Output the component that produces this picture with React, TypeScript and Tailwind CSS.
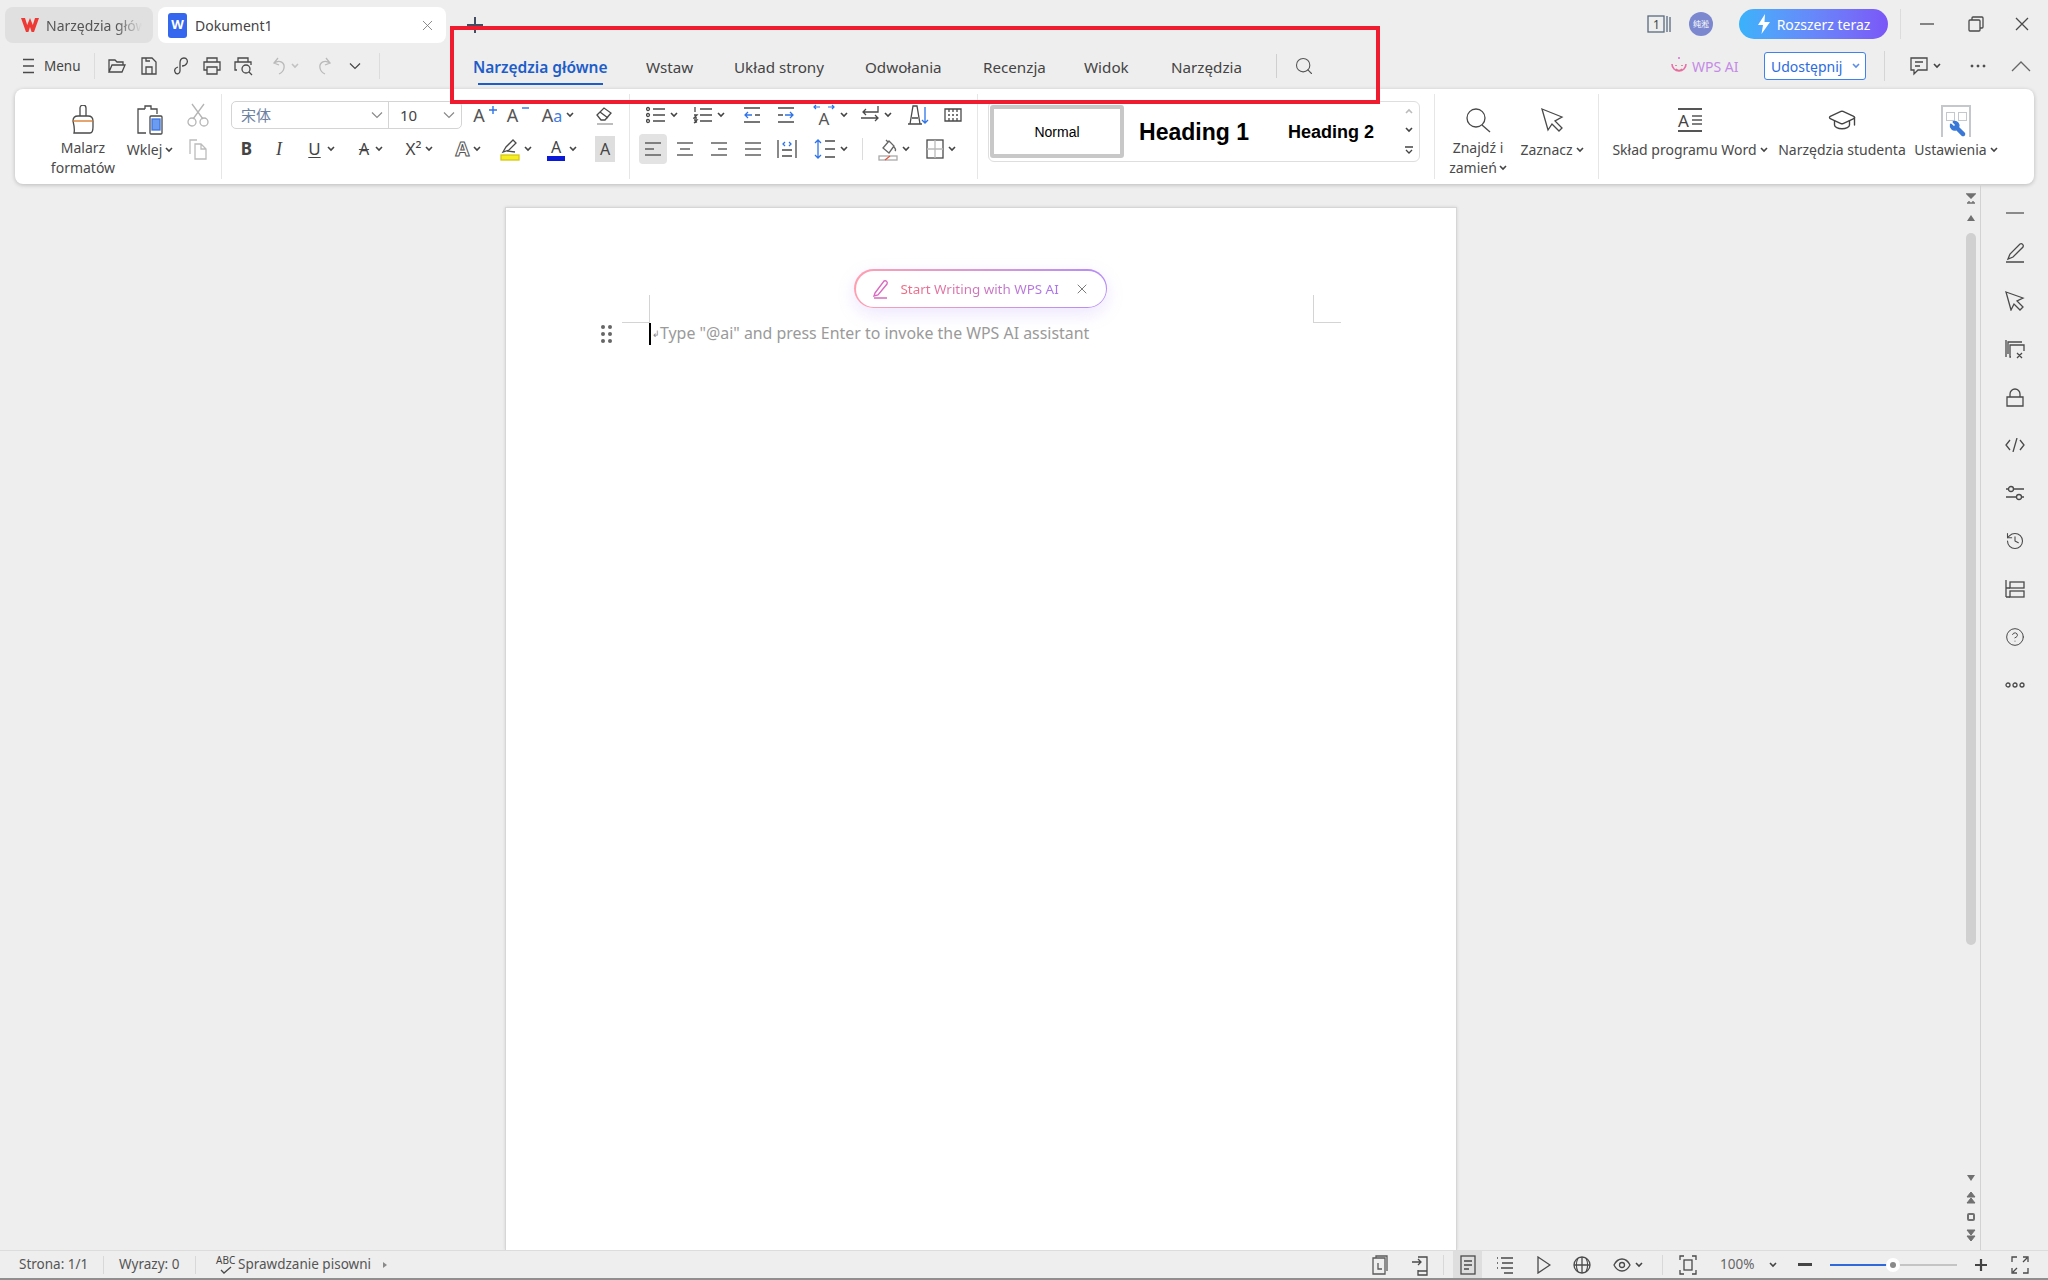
import React from "react";
import { CircleHelp, GraduationCap, History, Search, Wrench, X } from "lucide-react";

type IconProps = { w?: number; h?: number; c?: string; sw?: number; children: React.ReactNode };

// Base for all the hand drawn toolbar icons, coordinates are plain pixels
const Ic: React.FC<IconProps> = ({ w = 20, h = 20, c = "#4a4a4a", sw = 1.3, children }) => (
  <svg width={w} height={h} viewBox={`0 0 ${w} ${h}`} fill="none" stroke={c} strokeWidth={sw} className="shrink-0">
    {children}
  </svg>
);

const Chev: React.FC<{ c?: string }> = ({ c = "#444" }) => (
  <svg width="8" height="6" viewBox="0 0 8 6" fill="none" stroke={c} strokeWidth="1.6" className="shrink-0">
    <path d="M1 1l3 3 3-3" />
  </svg>
);

const ThinChev: React.FC<{ c?: string }> = ({ c = "#8a8a8a" }) => (
  <svg width="12" height="8" viewBox="0 0 12 8" fill="none" stroke={c} strokeWidth="1.2" className="shrink-0">
    <path d="M1 1.5l5 5 5-5" />
  </svg>
);

// One slot of a toolbar row
const Cell: React.FC<{ className: string; children: React.ReactNode }> = ({ className, children }) => (
  <div className={`flex items-center justify-center gap-[4px] shrink-0 ${className}`}>{children}</div>
);

const Sep: React.FC = () => <div className="w-px h-[85px] mt-[5px] bg-[#e6e6e6] shrink-0" />;

// Ribbon button with the icon above and the label below
const BigTool: React.FC<{ className: string; icon: React.ReactNode; children: React.ReactNode }> = ({
  className,
  icon,
  children,
}) => (
  <div className={`flex flex-col items-center pt-[14px] shrink-0 ${className}`}>
    <div className="h-[34px] flex items-center justify-center">{icon}</div>
    <div className="mt-[1px] text-[14px] leading-[20px] text-[#4a4a4a] text-center whitespace-nowrap">{children}</div>
  </div>
);

const Lines: React.FC<{ rows: number[][] }> = ({ rows }) => (
  <Ic w={18} h={18}>
    {rows.map((r, i) => (
      <path key={i} d={`M${r[0]} ${r[2]}H${r[1]}`} />
    ))}
  </Ic>
);

const tabs: { label: string; cls: string }[] = [
  { label: "Wstaw", cls: "w-[88px]" },
  { label: "Układ strony", cls: "w-[131px]" },
  { label: "Odwołania", cls: "w-[118px]" },
  { label: "Recenzja", cls: "w-[101px]" },
  { label: "Widok", cls: "w-[87px]" },
  { label: "Narzędzia", cls: "w-[105px]" },
];

const TitleBar: React.FC = () => (
  <div className="h-[47px] flex items-start pt-[7px] shrink-0">
    <div className="ml-[5px] w-[148px] h-[36px] rounded-lg bg-[#e0e0e0] flex items-center pl-[15px] gap-[6px]">
      <svg width="20" height="16" viewBox="0 0 20 16" className="shrink-0">
        <path d="M1 1h4l2.2 7L10 1l2.8 7L15 1h4l-5 14h-2.4L10 10l-1.6 5H6z" fill="#ee3a35" />
      </svg>
      <span className="text-[14px] text-[#555] whitespace-nowrap [mask-image:linear-gradient(90deg,#000_70%,transparent_96%)]">
        Narzędzia głów
      </span>
    </div>
    <div className="ml-[5px] w-[288px] h-[36px] rounded-lg bg-white flex items-center pl-[10px] gap-[8px]">
      <div className="w-[19px] h-[25px] rounded-[3px] bg-[#3467ee] text-white text-[13px] font-bold flex items-center justify-center">
        W
      </div>
      <span className="text-[14px] text-[#444]">Dokument1</span>
      <X size={17} strokeWidth={1.2} color="#777" className="ml-auto mr-[10px]" />
    </div>
    <div className="ml-[21px] mt-[8px]">
      <Ic w={16} h={20} c="#444e63" sw={2}>
        <path d="M8 2v16M0 10h16" />
      </Ic>
    </div>
    <div className="ml-auto flex items-center h-[34px] pr-[4px]">
      <Cell className="w-[40px]">
        <Ic w={26} h={20} c="#5a6a80">
          <rect x="1" y="2" width="16" height="16" />
          <path d="M20 2v16M23 3v15" />
          <text x="6" y="15" fontSize="12" stroke="none" fill="#444">
            1
          </text>
        </Ic>
      </Cell>
      <Cell className="w-[40px] pl-[2px]">
        <div className="w-[24px] h-[24px] rounded-full bg-[#7b88cf] text-white text-[8px] flex items-center justify-center font-['Noto_Sans_CJK_SC',sans-serif]">
          纯淞
        </div>
      </Cell>
      <div className="ml-[19px] w-[149px] h-[30px] rounded-full bg-gradient-to-r from-[#38b2fb] to-[#7a56f7] text-white text-[14px] flex items-center justify-center gap-[6px]">
        <svg width="14" height="20" viewBox="0 0 14 20" className="shrink-0">
          <path d="M8 0L1 11h5l-1.5 9L13 8H7.5z" fill="#fff" />
        </svg>
        Rozszerz teraz
      </div>
      <div className="ml-[12px] w-px h-[30px] bg-[#dcdcdc]" />
      <Cell className="w-[51px]">
        <Ic w={14} h={14}>
          <path d="M0 7h14" />
        </Ic>
      </Cell>
      <Cell className="w-[48px]">
        <Ic w={16} h={16}>
          <rect x="1" y="4" width="11" height="11" rx="1" />
          <path d="M4 4V2a1 1 0 0 1 1-1h9a1 1 0 0 1 1 1v9a1 1 0 0 1-1 1h-2" />
        </Ic>
      </Cell>
      <Cell className="w-[44px]">
        <Ic w={14} h={14}>
          <path d="M1 1l12 12M13 1L1 13" />
        </Ic>
      </Cell>
    </div>
  </div>
);

const CommandRow: React.FC = () => (
  <div className="h-[42px] flex items-center shrink-0">
    <div className="ml-[23px] mb-[4px] flex items-center gap-[10px] w-[71px]">
      <Ic w={11} h={16}>
        <path d="M0 1.5h11M0 8h11M0 14.5h11" />
      </Ic>
      <span className="text-[13.5px] text-[#444]">Menu</span>
    </div>
    <div className="w-px h-[26px] mb-[4px] bg-[#dcdcdc]" />
    <div className="ml-[6px] mb-[4px] flex items-center">
      <Cell className="w-[32px]">
        <Ic w={18} h={16}>
          <path d="M1 14V2h6l2 2h6v3M1 14h13l3-7H4z" />
        </Ic>
      </Cell>
      <Cell className="w-[32px]">
        <Ic w={16} h={20}>
          <path d="M1 2h10l4 4v12H1zM5 18v-7h6v7M5 2v3h4" />
        </Ic>
      </Cell>
      <Cell className="w-[31px]">
        <Ic w={16} h={20}>
          <path d="M5 11c-3 1-4 3-3 5 1 3 5 2 5-1V7c0-3 1-5 4-5s4 3 3 5-3 3-5 3" />
        </Ic>
      </Cell>
      <Cell className="w-[32px]">
        <Ic w={18} h={20}>
          <path d="M4 6V2h10v4M4 14H1V6h16v8h-3M4 11h10v7H4z" />
        </Ic>
      </Cell>
      <Cell className="w-[32px]">
        <Ic w={20} h={20}>
          <path d="M4 6V2h10v4M3 14H1V6h16v3" />
          <circle cx="12" cy="13" r="4" />
          <path d="M15 16l3 3" />
        </Ic>
      </Cell>
      <Cell className="w-[50px]">
        <Ic w={15} h={18} c="#b9b9b9">
          <path d="M6 1L2 6l5 2M2 6c6-4 11 0 10 5-.5 3-3 5-5 6" />
        </Ic>
        <Chev c="#c2c2c2" />
      </Cell>
      <Cell className="w-[28px]">
        <Ic w={15} h={18} c="#b9b9b9">
          <path d="M9 1l4 5-5 2M13 6C7 2 2 6 3 11c.5 3 3 5 5 6" />
        </Ic>
      </Cell>
      <Cell className="w-[34px]">
        <ThinChev c="#444" />
      </Cell>
    </div>
    <div className="ml-[7px] mb-[4px] w-px h-[26px] bg-[#dcdcdc]" />
    <div className="ml-[93px] flex items-center h-full">
      <div className="w-[173px] relative mb-[2px]">
        <span className="text-[15.5px] font-semibold text-[#1d5dc9] whitespace-nowrap">Narzędzia główne</span>
        <div className="absolute left-[5px] top-[28px] w-[125px] h-[2px] bg-[#1d5dc9]" />
      </div>
      {tabs.map((t) => (
        <div key={t.label} className={`${t.cls} mb-[2px] text-[15.2px] text-[#444] whitespace-nowrap`}>
          {t.label}
        </div>
      ))}
      <div className="w-px h-[24px] mb-[4px] bg-[#cfcfcf]" />
      <div className="ml-[17px] mb-[4px]">
        <Search size={20} strokeWidth={1.3} color="#555" />
      </div>
    </div>
    <div className="ml-auto mb-[4px] flex items-center">
      <div className="w-[67px] flex items-center gap-[4px] mr-[27px] -ml-[20px]">
        <svg width="18" height="20" viewBox="0 0 18 20" fill="none" strokeWidth="1.6" className="shrink-0">
          <path d="M2 8a7 7 0 0 0 14 0" stroke="#e96fa8" />
          <path d="M6 9v1M12 9v1M6 13c2 2 4 2 6 0" stroke="#e2708f" />
          <circle cx="9" cy="2" r="1" fill="#d86fd0" stroke="none" />
        </svg>
        <span className="text-[14px] text-[#c58ae6] whitespace-nowrap">WPS AI</span>
      </div>
      <div className="w-[102px] h-[28px] rounded-[3px] border border-[#3d82ee] bg-white text-[14px] text-[#2c6be0] flex items-center pl-[6px] gap-[10px]">
        Udostępnij
        <Chev c="#5a8fe8" />
      </div>
      <div className="ml-[18px] w-px h-[30px] bg-[#d5d5d5]" />
      <Cell className="w-[80px]">
        <Ic w={20} h={20}>
          <path d="M2 2h16v12H9l-4 4v-4H2zM6 6h8M6 10h5" />
        </Ic>
        <Chev />
      </Cell>
      <Cell className="w-[26px]">
        <Ic w={16} h={4} c="#444" sw={1}>
          <circle cx="2" cy="2" r="1" fill="#444" />
          <circle cx="8" cy="2" r="1" fill="#444" />
          <circle cx="14" cy="2" r="1" fill="#444" />
        </Ic>
      </Cell>
      <Cell className="w-[54px] ml-[3px]">
        <Ic w={20} h={12} c="#666">
          <path d="M1 11l9-9 9 9" />
        </Ic>
      </Cell>
    </div>
  </div>
);

const Ribbon: React.FC = () => (
  <div className="ml-[15px] w-[2019px] h-[95px] rounded-lg bg-white shadow-[0_1px_4px_rgba(0,0,0,0.22)] flex items-start shrink-0">
    {/* Clipboard group */}
    <div className="w-[206px] pl-[33px] flex items-start shrink-0">
      <BigTool
        className="w-[70px]"
        icon={
          <Ic w={26} h={30}>
            <path d="M10 11V3a3 3 0 0 1 6 0v8M3 16c0-3 2-5 5-5h10c3 0 5 2 5 5v6c0 3 0 6-3 6H4c1-4 0-8-1-12z" />
            <path d="M3 16h20" stroke="#d9751f" />
          </Ic>
        }
      >
        Malarz
        <br />
        formatów
      </BigTool>
      <BigTool
        className="w-[58px] ml-[3px]"
        icon={
          <Ic w={26} h={30}>
            <path d="M8 4V1h6v3h6v5M8 4H1v24h8" />
            <rect x="13" y="11" width="12" height="18" rx="1" />
            <rect x="15" y="14" width="8" height="11" fill="#6c9cf0" stroke="#3a73e0" />
          </Ic>
        }
      >
        <div className="flex items-center gap-[3px] mt-[2px]">
          Wklej <Chev />
        </div>
      </BigTool>
      <div className="w-[38px] flex flex-col items-center">
        <Cell className="h-[28px] mt-[12px]">
          <Ic w={22} h={24} c="#b5b5b5">
            <path d="M5 1l11 15M17 1L6 16" />
            <circle cx="5" cy="19" r="4" />
            <circle cx="17" cy="19" r="4" />
          </Ic>
        </Cell>
        <Cell className="h-[28px] mt-[6px]">
          <Ic w={20} h={22} c="#bcbcbc">
            <path d="M2 16V2h7M7 6h6l5 5v10H7zM13 6v5h5" />
          </Ic>
        </Cell>
      </div>
    </div>
    <Sep />
    {/* Font group */}
    <div className="w-[407px] pl-[9px] pt-[12px] flex flex-col shrink-0">
      <div className="flex items-center h-[28px]">
        <div className="w-[231px] h-[28px] rounded-[5px] border border-[#d4d4d4] flex items-center shrink-0">
          <div className="w-[157px] pl-[9px] pr-[5px] flex items-center justify-between border-r border-[#d4d4d4] h-full">
            <span className="text-[15px] text-[#6d82a3] font-['Noto_Sans_CJK_SC',sans-serif]">宋体</span>
            <ThinChev />
          </div>
          <div className="flex-1 pl-[11px] pr-[6px] flex items-center justify-between text-[15px] text-[#444]">
            10
            <ThinChev />
          </div>
        </div>
        <Cell className="w-[34px] ml-[6px] text-[18px] text-[#555] gap-[1px]">
          A
          <div className="-mt-[10px]">
            <Ic w={8} h={8} c="#2f74e6" sw={1.4}>
              <path d="M4 0v8M0 4h8" />
            </Ic>
          </div>
        </Cell>
        <Cell className="w-[32px] text-[18px] text-[#555] gap-[1px]">
          A
          <div className="-mt-[14px]">
            <Ic w={7} h={2} c="#2f74e6" sw={1.4}>
              <path d="M0 1h7" />
            </Ic>
          </div>
        </Cell>
        <Cell className="w-[48px] text-[18px] text-[#555]">
          <span>
            A<span className="text-[#3f7ce6] text-[16px]">a</span>
          </span>
          <Chev />
        </Cell>
        <Cell className="w-[46px]">
          <Ic w={20} h={20}>
            <path d="M2 10l7-7 7 5-6 7H6zM5 7l8 6" />
            <path d="M2 19h16" stroke="#9a9a9a" />
          </Ic>
        </Cell>
      </div>
      <div className="flex items-center h-[28px] mt-[6px] text-[#444]">
        <Cell className="w-[31px] text-[17px] font-bold">B</Cell>
        <Cell className="w-[34px] text-[18px] italic font-['Liberation_Serif',serif]">I</Cell>
        <Cell className="w-[51px] text-[17px] gap-[6px]">
          <span className="underline underline-offset-2">U</span>
          <Chev />
        </Cell>
        <Cell className="w-[48px] text-[16px] gap-[6px]">
          <span className="line-through">A</span>
          <Chev />
        </Cell>
        <Cell className="w-[49px] text-[17px]">
          X²
          <Chev />
        </Cell>
        <Cell className="w-[49px]">
          <span className="text-[20px] font-bold text-transparent [-webkit-text-stroke:1px_#555]">A</span>
          <Chev />
        </Cell>
        <Cell className="w-[45px]">
          <Ic w={20} h={24}>
            <path d="M3 15l3-5 7-7 3 3-7 7zM7 14l8 1" />
            <rect x="1" y="18" width="18" height="5" fill="#f6ee20" stroke="#d4c814" />
          </Ic>
          <Chev />
        </Cell>
        <Cell className="w-[48px]">
          <div className="flex flex-col items-center w-[18px] text-[16px] leading-[18px]">
            A<div className="w-[18px] h-[5px] bg-[#0a18d8]" />
          </div>
          <Chev />
        </Cell>
        <Cell className="w-[38px]">
          <div className="w-[20px] h-[26px] bg-[#dedede] flex items-center justify-center text-[16px]">A</div>
        </Cell>
      </div>
    </div>
    <Sep />
    {/* Paragraph group */}
    <div className="w-[347px] pl-[9px] pt-[12px] flex flex-col shrink-0">
      <div className="flex items-center h-[28px]">
        <Cell className="w-[45px]">
          <Ic w={20} h={18}>
            <circle cx="2" cy="3" r="1.5" />
            <circle cx="2" cy="9" r="1.5" />
            <circle cx="2" cy="15" r="1.5" />
            <path d="M7 3h12M7 9h12M7 15h12" />
          </Ic>
          <Chev />
        </Cell>
        <Cell className="w-[50px]">
          <Ic w={20} h={18}>
            <path d="M7 3h12M7 9h12M7 15h12" />
            <path d="M2 1v5M1 9h3l-3 3h3M1 14h3l-2 2h2l-3 1" />
          </Ic>
          <Chev />
        </Cell>
        <Cell className="w-[36px]">
          <Ic w={18} h={18}>
            <path d="M1 2h16M1 16h16M12 9h5" />
            <path d="M9 9H2M5 6L2 9l3 3" stroke="#2f74e6" />
          </Ic>
        </Cell>
        <Cell className="w-[32px]">
          <Ic w={18} h={18}>
            <path d="M1 2h16M1 16h16M1 9h5" />
            <path d="M8 9h8M13 6l3 3-3 3" stroke="#2f74e6" />
          </Ic>
        </Cell>
        <Cell className="w-[56px]">
          <div className="flex flex-col items-center w-[24px] text-[17px] leading-[17px] text-[#555]">
            <Ic w={22} h={6} c="#2f74e6" sw={1.2}>
              <path d="M1 3h6M3 1L1 3l2 2M21 3h-6M19 1l2 2-2 2" />
            </Ic>
            A
          </div>
          <Chev />
        </Cell>
        <Cell className="w-[36px]">
          <Ic w={20} h={20}>
            <path d="M18 1v6H3M6 4L3 7l3 3M1 13h17M15 10l3 3-3 3" />
          </Ic>
          <Chev />
        </Cell>
        <Cell className="w-[40px] ml-[4px]">
          <Ic w={22} h={22}>
            <path d="M3 20L6 2h4l3 18zM1 20h14M5 14h6" />
            <path d="M18 3v16M15 16l3 3 3-3" stroke="#2f74e6" />
          </Ic>
        </Cell>
        <Cell className="w-[30px]">
          <Ic w={18} h={16}>
            <path d="M1 2h16v12H1zM5 2v3M9 2v3M13 2v3M5 14v-3M9 14v-3M13 14v-3M4 8h2M8 8h2M12 8h2" />
          </Ic>
        </Cell>
      </div>
      <div className="flex items-center h-[28px] mt-[6px]">
        <Cell className="w-[28px] h-[30px] rounded-[4px] bg-[#e3e3e3]">
          <Lines rows={[[1, 17, 3], [1, 10, 9], [1, 17, 15]]} />
        </Cell>
        <Cell className="w-[36px]">
          <Lines rows={[[1, 17, 3], [4, 14, 9], [1, 17, 15]]} />
        </Cell>
        <Cell className="w-[32px]">
          <Lines rows={[[1, 17, 3], [8, 17, 9], [1, 17, 15]]} />
        </Cell>
        <Cell className="w-[36px]">
          <Lines rows={[[1, 17, 3], [1, 17, 9], [1, 17, 15]]} />
        </Cell>
        <Cell className="w-[32px]">
          <Ic w={20} h={20}>
            <path d="M1 1v18M19 1v18M5 11h10M5 17h10" />
            <path d="M8 3L6 5l2 2M12 3l2 2-2 2" stroke="#2f74e6" />
          </Ic>
        </Cell>
        <Cell className="w-[55px]">
          <Ic w={22} h={22}>
            <path d="M4 2v18M1 5l3-3 3 3M1 17l3 3 3-3" stroke="#2f74e6" />
            <path d="M11 3h10M11 11h10M11 19h10" />
          </Ic>
          <Chev />
        </Cell>
        <div className="ml-[4px] w-px h-[22px] bg-[#dcdcdc] shrink-0" />
        <Cell className="w-[54px] ml-[4px]">
          <Ic w={20} h={24} c="#666">
            <path d="M5 11l6-7 5 5-5 7zM8 3l2 2M16 10c1 1 2 3 1 4" />
            <rect x="1" y="19" width="18" height="4" stroke="#aaa" />
            <path d="M7 23l5-4" stroke="#e0553a" />
          </Ic>
          <Chev />
        </Cell>
        <Cell className="w-[40px]">
          <Ic w={18} h={20}>
            <rect x="1" y="1" width="16" height="18" />
            <path d="M9 1v18M1 10h16" stroke="#bbb" />
          </Ic>
          <Chev />
        </Cell>
      </div>
    </div>
    <Sep />
    {/* Styles gallery */}
    <div className="w-[456px] pl-[10px] pt-[12px] shrink-0">
      <div className="w-[432px] h-[61px] rounded-[6px] border border-[#dedede] flex items-center pl-[1px] font-['Liberation_Sans',sans-serif]">
        <div className="w-[134px] h-[53px] pt-[1px] border-[4px] border-[#c8c8c8] rounded-[3px] flex items-center justify-center text-[14px] text-black">
          Normal
        </div>
        <div className="w-[140px] pt-[2px] text-center text-[23px] font-bold text-black whitespace-nowrap">Heading 1</div>
        <div className="w-[134px] pt-[2px] text-center text-[18px] font-bold text-black whitespace-nowrap">Heading 2</div>
        <div className="flex-1 flex flex-col items-center gap-[13px]">
          <div className="rotate-180">
            <Chev c="#bbb" />
          </div>
          <Chev />
          <Ic w={8} h={9} c="#444">
            <path d="M0 1h8M1 4l3 3 3-3" />
          </Ic>
        </div>
      </div>
    </div>
    <Sep />
    {/* Find and select */}
    <div className="w-[163px] pl-[13px] flex items-start shrink-0">
      <BigTool
        className="w-[60px]"
        icon={
          <Ic w={26} h={26}>
            <circle cx="11" cy="11" r="9" />
            <path d="M17 18l8 7" />
          </Ic>
        }
      >
        Znajdź i
        <div className="flex items-center justify-center gap-[2px]">
          zamień <Chev />
        </div>
      </BigTool>
      <BigTool
        className="w-[72px] ml-[8px]"
        icon={
          <Ic w={24} h={26}>
            <path d="M2 2l20 8-7 4 7 7-3 3-7-7-4 6z" />
          </Ic>
        }
      >
        <div className="flex items-center gap-[3px] mt-[2px]">
          Zaznacz <Chev />
        </div>
      </BigTool>
    </div>
    <Sep />
    {/* Extras */}
    <div className="pl-[6px] flex items-start">
      <BigTool
        className="w-[170px]"
        icon={
          <div className="flex flex-col w-[24px]">
            <div className="h-[2px] bg-[#555]" />
            <div className="flex items-center justify-between h-[20px] text-[17px] leading-none text-[#444]">
              A
              <Ic w={10} h={12} c="#555">
                <path d="M0 2h10M0 6h10M0 10h10" />
              </Ic>
            </div>
            <div className="h-[2px] bg-[#555]" />
          </div>
        }
      >
        <div className="flex items-center gap-[3px] mt-[2px]">
          Skład programu Word <Chev />
        </div>
      </BigTool>
      <BigTool className="w-[134px]" icon={<GraduationCap size={30} strokeWidth={1.1} color="#444" />}>
        <div className="mt-[2px]">Narzędzia studenta</div>
      </BigTool>
      <BigTool
        className="w-[94px]"
        icon={
          <div className="relative w-[30px] h-[32px] mt-[2px] border-x-2 border-t-2 border-[#c4c8cc] flex justify-center gap-[3px] pt-[5px]">
            <div className="w-[9px] h-[9px] border border-[#c4c8cc]" />
            <div className="w-[9px] h-[9px] border border-[#c4c8cc]" />
            <Wrench size={17} strokeWidth={2} color="#3a78d8" fill="#3a78d8" className="absolute left-[6px] top-[13px] scale-x-[-1]" />
          </div>
        }
      >
        <div className="flex items-center gap-[3px] mt-[2px]">
          Ustawienia <Chev />
        </div>
      </BigTool>
    </div>
  </div>
);

const Page: React.FC = () => (
  <div className="relative w-[952px] h-[1043px] bg-white border-x border-t border-[#d6d6d6] shadow-[0_0_3px_rgba(0,0,0,0.12)] pl-[143px] pt-[115px]">
    {/* crop marks */}
    <div className="absolute left-[116px] top-[87px] w-[28px] h-[28px] border-r border-b border-[#d4d4d4]" />
    <div className="absolute left-[807px] top-[87px] w-[28px] h-[28px] border-l border-b border-[#d4d4d4]" />
    <div className="absolute left-[95px] top-[117px] grid grid-cols-2 gap-x-[3px] gap-y-[3px]">
      {[0, 1, 2, 3, 4, 5].map((i) => (
        <div key={i} className="w-[4px] h-[4px] rounded-full bg-[#666]" />
      ))}
    </div>
    {/* AI pill */}
    <div className="absolute left-[348px] top-[61px] w-[253px] h-[39px] rounded-full p-[1.5px] bg-gradient-to-r from-[#ff9fb0] to-[#b48cf6] shadow-[0_6px_18px_rgba(170,130,250,0.2)]">
      <div className="w-full h-full rounded-full bg-white flex items-center pl-[16px] gap-[11px]">
        <Ic w={18} h={20} c="#d86bc0" sw={1.4}>
          <path d="M3 14l9-12c2-1 4 1 3 3L6 16l-4 1zM2 19h13" />
        </Ic>
        <span className="pt-[1px] text-[13.4px] whitespace-nowrap bg-gradient-to-r from-[#f36b80] to-[#a873f0] bg-clip-text text-transparent">
          Start Writing with WPS AI
        </span>
        <X size={16} strokeWidth={1.3} color="#666" className="ml-auto mr-[16px] shrink-0" />
      </div>
    </div>
    <div className="flex items-center h-[22px] relative">
      <div className="w-[2px] h-[22px] bg-black" />
      <span className="ml-[1px] w-[8px] text-[9px] text-[#888]">↲</span>
      <span className="text-[15.9px] text-[#9a9a9a] whitespace-nowrap">Type "@ai" and press Enter to invoke the WPS AI assistant</span>
    </div>
  </div>
);

// Column with the vertical scrollbar and its page buttons
const ScrollColumn: React.FC = () => (
  <div className="w-[18px] flex flex-col items-center shrink-0 pt-[9px]">
    <Ic w={10} h={12} c="#707070" sw={1.4}>
      <path d="M1 1h8L5 5zM1 10h8M3 8v2M7 8v2" fill="#707070" />
    </Ic>
    <div className="mt-[10px] w-0 h-0 border-x-[4px] border-x-transparent border-b-[6px] border-b-[#707070]" />
    <div className="mt-[12px] w-[10px] h-[712px] rounded-full bg-[#d0d0d0]" />
    <div className="mt-auto flex flex-col items-center pb-[7px]">
      <div className="w-0 h-0 border-x-[4px] border-x-transparent border-t-[6px] border-t-[#707070]" />
      <div className="mt-[10px] flex">
        <Ic w={10} h={14} c="#707070" sw={1}>
          <path d="M5 1l4 5H1zM5 7l4 5H1z" fill="#707070" />
        </Ic>
      </div>
      <div className="mt-[8px] w-[8px] h-[8px] rounded-[2px] border-2 border-[#707070]" />
      <div className="mt-[8px] flex">
        <Ic w={10} h={14} c="#707070" sw={1}>
          <path d="M1 1h8L5 6zM1 7h8l-4 5z" fill="#707070" />
        </Ic>
      </div>
    </div>
  </div>
);

const sideIcons: React.ReactNode[] = [
  <Ic w={20} h={20} key="pen">
    <path d="M3 16l2-5L15 1c2-1 4 1 3 3L8 14zM1 19h18" />
  </Ic>,
  <Ic w={20} h={20} key="cur">
    <path d="M1 1l17 6-6 3 6 6-3 3-6-6-3 6z" />
  </Ic>,
  <Ic w={20} h={20} key="copy">
    <path d="M3 15V3h14M1 18V1M6 18H5V6h14v6M12 14l5 5M17 14l-5 5" />
  </Ic>,
  <Ic w={18} h={20} key="lock">
    <path d="M1 10h16v9H1zM4 10V7a5 5 0 0 1 10 0v3" />
  </Ic>,
  <Ic w={20} h={14} key="code">
    <path d="M5 2L1 7l4 5M15 2l4 5-4 5M12 0L8 14" />
  </Ic>,
  <Ic w={20} h={18} key="slide">
    <circle cx="6" cy="5" r="2.5" />
    <circle cx="14" cy="13" r="2.5" />
    <path d="M1 5h2.5M8.5 5H19M1 13h10.5M16.5 13H19" />
  </Ic>,
  <History size={20} strokeWidth={1.3} color="#4a4a4a" key="hist" />,
  <Ic w={20} h={20} key="lay">
    <path d="M1 1v17M1 9h4M1 18h4" />
    <rect x="5" y="3" width="14" height="6" />
    <rect x="5" y="12" width="14" height="6" />
  </Ic>,
  <CircleHelp size={20} strokeWidth={1.2} color="#4a4a4a" key="help" />,
  <Ic w={20} h={6} key="more">
    <circle cx="3" cy="3" r="2" />
    <circle cx="10" cy="3" r="2" />
    <circle cx="17" cy="3" r="2" />
  </Ic>,
];

const SideBar: React.FC = () => (
  <div className="w-[68px] border-l border-[#d2d2d2] flex flex-col items-center shrink-0">
    <div className="mt-[21px] mb-[8px] h-[16px] flex items-center">
      <Ic w={18} h={2} c="#8a8a8a" sw={2}>
        <path d="M0 1h18" />
      </Ic>
    </div>
    {sideIcons.map((icon, i) => (
      <div key={i} className="h-[48px] w-full flex items-center justify-center shrink-0">
        {icon}
      </div>
    ))}
  </div>
);

const StatusBar: React.FC = () => (
  <div className="h-[30px] border-t border-[#dcdcdc] border-b-2 border-b-[#8f8f8f] bg-[#eeeeee] flex items-center shrink-0 text-[13.5px] text-[#555]">
    <div className="ml-[19px] w-[84px]">Strona: 1/1</div>
    <div className="w-px h-[18px] bg-[#d8d8d8]" />
    <div className="ml-[15px] w-[76px]">Wyrazy: 0</div>
    <div className="w-px h-[18px] bg-[#d8d8d8]" />
    <div className="ml-[20px] flex items-center gap-[2px]">
      <div className="relative w-[20px] h-[20px] text-[10px] leading-[10px] text-[#444]">
        ABC
        <div className="absolute left-[4px] top-[11px]">
          <Ic w={12} h={8}>
            <path d="M1 4l3 3 7-6" />
          </Ic>
        </div>
      </div>
      <span className="whitespace-nowrap">Sprawdzanie pisowni</span>
    </div>
    <div className="ml-[12px] w-0 h-0 border-y-[3px] border-y-transparent border-l-[4px] border-l-[#8a8a8a]" />
    <div className="ml-auto flex items-center h-full">
      <Cell className="w-[40px]">
        <Ic w={16} h={20}>
          <path d="M1 3h12v16H1zM6 8v6h4M4 3V1h11v15" stroke="#5a5a5a" />
        </Ic>
      </Cell>
      <Cell className="w-[40px]">
        <Ic w={18} h={22}>
          <path d="M7 3h9v18H7v-5M7 17h9M1 8h9M7 5l3 3-3 3" />
        </Ic>
      </Cell>
      <div className="ml-[3px] w-px h-[20px] bg-[#d8d8d8]" />
      <Cell className="w-[29px] h-full bg-[#dedede] ml-[9px]">
        <Ic w={16} h={20}>
          <rect x="1" y="1" width="14" height="18" />
          <path d="M4 6h8M4 10h8M4 14h5" />
        </Ic>
      </Cell>
      <Cell className="w-[38px] ml-[4px]">
        <Ic w={18} h={18}>
          <path d="M5 2h12M6 7h11M5 12h12M8 17h9M1 2h1M1 7h1M1 12h1" />
        </Ic>
      </Cell>
      <Cell className="w-[40px]">
        <Ic w={14} h={18}>
          <path d="M1 1l12 8-12 8z" />
        </Ic>
      </Cell>
      <Cell className="w-[36px]">
        <Ic w={18} h={18}>
          <circle cx="9" cy="9" r="8" />
          <path d="M1 9h16M9 1v16M5 2c-2 4-2 10 0 14M13 2c2 4 2 10 0 14" />
        </Ic>
      </Cell>
      <Cell className="w-[48px] ml-[4px]">
        <Ic w={18} h={14}>
          <path d="M1 7c4-8 12-8 16 0-4 8-12 8-16 0z" />
          <circle cx="9" cy="7" r="2.5" />
        </Ic>
        <Chev />
      </Cell>
      <div className="ml-[10px] w-px h-[20px] bg-[#d8d8d8]" />
      <Cell className="w-[50px]">
        <Ic w={18} h={20}>
          <rect x="5" y="5" width="8" height="10" />
          <path d="M1 5V1h4M13 1h4v4M17 15v4h-4M5 19H1v-4" />
        </Ic>
      </Cell>
      <div className="w-[36px] text-[13.5px] text-[#666] ml-[7px]">100%</div>
      <Cell className="w-[26px] ml-[4px]">
        <Chev />
      </Cell>
      <Cell className="w-[30px] ml-[4px]">
        <div className="w-[14px] h-[2.5px] bg-[#444]" />
      </Cell>
      <div className="ml-[10px] w-[127px] h-[2px] bg-[#c4c4c4] relative">
        <div className="w-[63px] h-full bg-[#2f68d8]" />
        <div className="absolute left-[56px] -top-[6px] w-[14px] h-[14px] rounded-full bg-white flex items-center justify-center">
          <div className="w-[6px] h-[6px] rounded-full bg-[#8a8a8a]" />
        </div>
      </div>
      <Cell className="w-[48px]">
        <Ic w={14} h={14} c="#444" sw={2.2}>
          <path d="M7 1v12M1 7h12" />
        </Ic>
      </Cell>
      <Cell className="w-[30px] mr-[13px]">
        <Ic w={18} h={18}>
          <path d="M1 6V1h5M12 1h5v5M17 12v5h-5M6 17H1v-5M12 6l4-4M6 12l-4 4" />
        </Ic>
      </Cell>
    </div>
  </div>
);

const App: React.FC = () => {
  return (
    <div className="relative w-[2048px] h-[1280px] overflow-hidden bg-[#eeeeee] flex flex-col font-['Noto_Sans',sans-serif]">
      <TitleBar />
      <CommandRow />
      <Ribbon />
      <div className="flex-1 flex min-h-0">
        <div className="flex-1 flex justify-center pt-[23px] overflow-hidden">
          <Page />
        </div>
        <ScrollColumn />
        <SideBar />
      </div>
      <StatusBar />
      {/* Red annotation box drawn over the screenshot */}
      <div className="absolute left-[450px] top-[26px] w-[930px] h-[78px] border-[4px] border-[#ee1c2e] pointer-events-none" />
    </div>
  );
};

export default App;
